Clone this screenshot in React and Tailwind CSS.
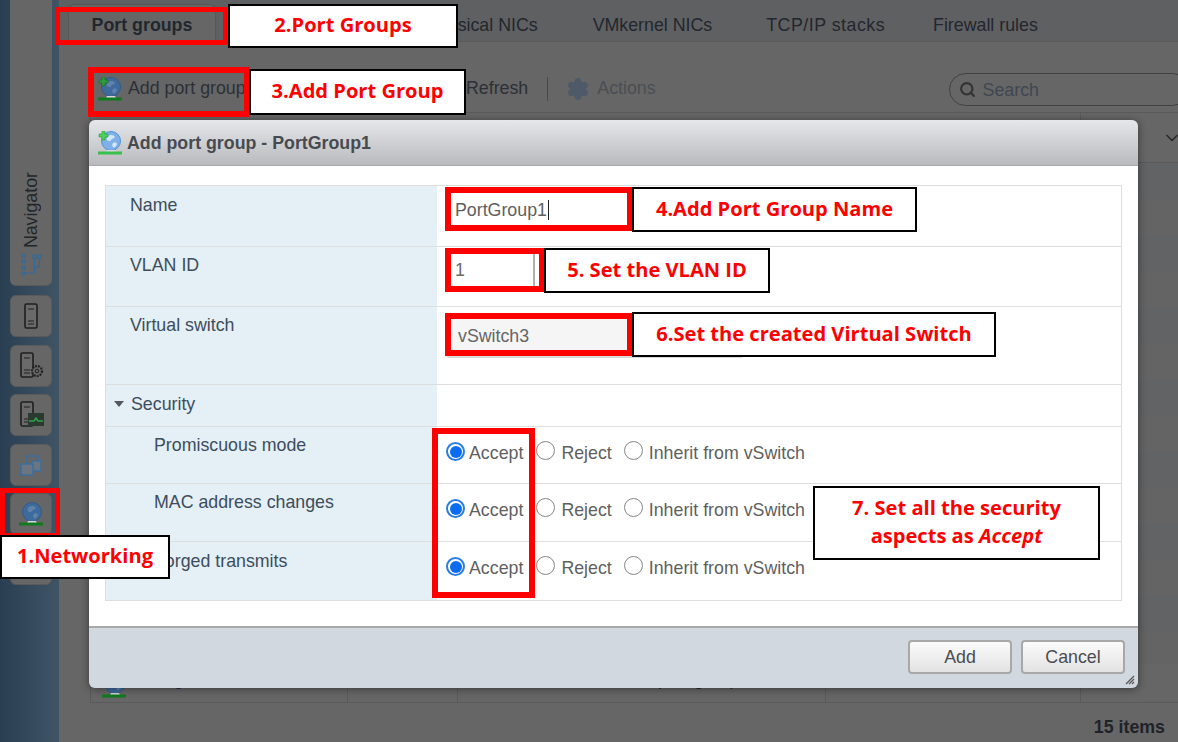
import React from 'react';
import { Search, ChevronDown, Settings } from 'lucide-react';

const GlobeIcon = ({ plus, dim }) => (
    <svg width="24" height="24" viewBox="0 0 24 24" className="shrink-0">
        <circle cx="13" cy="10" r="9.5" fill={dim ? '#3f6a9c' : '#7fb0e6'} stroke={dim ? '#2f5a88' : '#4f8fd8'} />
        <path d="M10 5c3-2 6-1 7 1-1 2-3 1-4 3s-3 1-4 0 0-3 1-4zM15 12c2-1 4 0 4 1-1 3-3 4-4 3s-1-3 0-4z" fill={dim ? '#5f83ab' : '#d5e6f8'} />
        <path d="M9 19h8l1 2H8z" fill="#d8d8d8" />
        <rect x="0" y="20.5" width="24" height="3" fill={dim ? '#0f7a1e' : '#39c04a'} />
        {plus && <path d="M4 0h3v3h3v3H7v3H4V6H1V3h3z" fill={dim ? '#2f9a3e' : '#4fd05f'} stroke={dim ? '#1c6a28' : '#2a9a3a'} strokeWidth="0.6" />}
    </svg>
);

const ServerIcon = ({ children }) => (
    <svg width="26" height="28" viewBox="0 0 26 28">
        <rect x="3" y="1" width="12" height="24" rx="1.5" fill="#6a6a6a" stroke="#1f1f1f" strokeWidth="1.6" />
        <path d="M6 6h6M6 18h6M6 21h6" stroke="#1f1f1f" strokeWidth="1.2" />
        {children}
    </svg>
);

const RailButton = ({ children }) => (
    <div className="w-[42px] h-[42px] rounded-md bg-[#666666] border border-[#5a5a5a] flex items-center justify-center">
        {children}
    </div>
);

const Radio = ({ on }) => on ? (
    <span className="w-[19px] h-[19px] rounded-full border-2 border-[#2a7de1] flex items-center justify-center shrink-0">
        <span className="w-[12px] h-[12px] rounded-full bg-[#0b6cf0]"></span>
    </span>
) : (
    <span className="block w-[19px] h-[19px] rounded-full border-[1.5px] border-[#858585] shrink-0"></span>
);

const SecurityRow = ({ label, h, labelPad }) => (
    <div className={`flex border-t border-[#dedede] ${h}`}>
        <div className={`w-[331px] bg-[#e4eff6] pl-[48px] ${labelPad} text-[#3d4d5c]`}>{label}</div>
        <div className="flex-1 flex items-start pl-[9px] pt-[15px] text-[#5f5f5f]">
            <Radio on />
            <span className="ml-[4px] mt-[1px]">Accept</span>
            <span className="ml-[13px] mt-[-1px]"><Radio /></span>
            <span className="ml-[6px] mt-[1px]">Reject</span>
            <span className="ml-[12px] mt-[-1px]"><Radio /></span>
            <span className="ml-[6px] mt-[1px]">Inherit from vSwitch</span>
        </div>
    </div>
);

const Mark = ({ className }) => (
    <div className={`absolute border-[#ff0000] ${className}`}></div>
);

const Note = ({ className, children }) => (
    <div className={`absolute bg-white border-2 border-black pb-[2px] flex items-center justify-center text-center text-[#ff0000] font-bold text-[20.1px] leading-[28px] font-['Open_Sans',sans-serif] ${className}`}>
        {children}
    </div>
);

const App = () => {
    const stripes = [0, 1, 2, 3, 4, 5, 6, 7, 8, 9, 10, 11, 12, 13];

    return (
        <div className="relative w-[1178px] h-[742px] overflow-hidden bg-[#666666] flex font-['Liberation_Sans',sans-serif] text-[17.8px] leading-[20px]">
            {/* Left rail */}
            <div className="w-[59px] h-full shrink-0 bg-gradient-to-r from-[#2a3e52] to-[#3f5566] pl-[10px] flex flex-col">
                <div className="w-[42px] h-[286px] rounded-b-md bg-[#666666] border-b border-[#5a5a5a] flex flex-col justify-end items-center pb-[7px]">
                    <span className="[writing-mode:vertical-rl] rotate-180 text-[#22262b] mb-[5px]">Navigator</span>
                    <svg width="24" height="25" viewBox="0 0 24 25" fill="none" stroke="#2e6a9c" strokeWidth="1.2">
                        <path d="M3 1h3v3H3zM3 7h3v3H3zM3 13h3v3H3zM3 19h3v3H3zM14 2h3v3h-3zM19 2h3v3h-3zM6 20h9.5V5M15.5 14h5V5" />
                    </svg>
                </div>
                <div className="flex flex-col gap-[7.6px] mt-[9px]">
                    <RailButton>
                        <svg width="16" height="26" viewBox="0 0 16 26">
                            <rect x="2" y="1" width="12" height="24" rx="1.5" fill="#6a6a6a" stroke="#1f1f1f" strokeWidth="1.6" />
                            <path d="M5 6h6M5 18h6M5 21h6" stroke="#1f1f1f" strokeWidth="1.2" />
                        </svg>
                    </RailButton>
                    <RailButton>
                        <ServerIcon>
                            <circle cx="19" cy="19" r="5" fill="#666666" stroke="#222222" strokeWidth="2.2" strokeDasharray="2 1" />
                            <circle cx="19" cy="19" r="1.8" fill="#666666" stroke="#222222" />
                        </ServerIcon>
                    </RailButton>
                    <RailButton>
                        <ServerIcon>
                            <rect x="10" y="12" width="16" height="13" fill="#2a3a2e" />
                            <path d="M11 20h5l2-3 2 3h5" stroke="#2fa24a" strokeWidth="1.5" fill="none" />
                        </ServerIcon>
                    </RailButton>
                    <RailButton>
                        <svg width="24" height="24" viewBox="0 0 24 24" fill="none" stroke="#3b6f9c" strokeWidth="1.5">
                            <rect x="8" y="3" width="11" height="10" />
                            <rect x="13" y="8" width="9" height="10" fill="#6a7682" />
                            <rect x="2" y="11" width="12" height="11" fill="#6a7682" />
                        </svg>
                    </RailButton>
                    <RailButton>
                        <GlobeIcon dim />
                    </RailButton>
                    <RailButton></RailButton>
                </div>
            </div>

            {/* Main content, dimmed behind the dialog */}
            <div className="flex-1 flex flex-col min-w-0">
                <div className="h-[42px] shrink-0 bg-[#5f6062] flex items-end text-[#22272e] border-b border-[#5a5a5a]">
                    <div className="ml-[9px] w-[148px] h-[37px] pt-[4px] bg-[#666666] border-x border-t border-[#575757] rounded-t-md flex items-center justify-center font-bold">Port groups</div>
                    <div className="h-[33px] flex items-center flex-1">
                        <span className="w-[211px] shrink-0"></span>
                        <span className="whitespace-nowrap">Physical NICs</span>
                        <span className="ml-[55px] whitespace-nowrap">VMkernel NICs</span>
                        <span className="ml-[54px] whitespace-nowrap tracking-[0.5px]">TCP/IP stacks</span>
                        <span className="ml-[48px] whitespace-nowrap">Firewall rules</span>
                    </div>
                </div>

                <div className="h-[70px] shrink-0 pl-[39px] flex items-start pt-[36px] text-[#2c3036]">
                    <span className="mt-[-1px] shrink-0"><GlobeIcon plus dim /></span>
                    <span className="ml-[6px] w-[338px] shrink-0 whitespace-nowrap">Add port group</span>
                    <span className="shrink-0">Refresh</span>
                    <span className="ml-[19px] mt-[-1px] w-px h-[24px] shrink-0 bg-[#45494d]"></span>
                    <Settings size={24} className="ml-[18px] mt-[-1px] shrink-0 text-[#4e5a68]" fill="#4e5a68" />
                    <span className="ml-[7px] shrink-0 text-[#4a4e52]">Actions</span>
                    <div className="ml-[293px] mt-[-5px] w-[240px] h-[33px] shrink-0 border border-[#3f4042] rounded-full flex items-center pl-[9px] text-[#3f4750]">
                        <Search size={17} strokeWidth={3} className="text-[#333333]" />
                        <span className="ml-[7px]">Search</span>
                    </div>
                </div>

                <div className="flex-1 ml-[31px] border-l border-y border-[#5a5a5a] flex flex-col min-h-0">
                    <div className="h-[50px] shrink-0 border-b border-[#5a5a5a] flex justify-end items-center">
                        <span className="h-full w-[98px] border-l border-[#5a5a5a] flex items-center justify-end">
                            <ChevronDown size={20} className="text-[#2a2a2a] mr-[-4px]" />
                        </span>
                    </div>
                    <div className="flex-1 flex flex-col overflow-hidden min-h-0">
                        {stripes.map(i => (
                            <div key={i} className="h-[36px] shrink-0 even:bg-[#646464] odd:bg-[#626365]"></div>
                        ))}
                    </div>
                    <div className="h-[38px] shrink-0 relative text-[#1c2f45]">
                        <span className="absolute left-[490px] top-[5px] whitespace-nowrap text-[#22272e]">Standard port group</span>
                        <span className="absolute left-[38px] top-[5px] whitespace-nowrap">Management Network</span>
                        <span className="absolute left-[11px] top-[10px]"><GlobeIcon dim /></span>
                        <span className="absolute left-[745px] top-[8px] w-[25px] h-[10px] bg-[#2a2d33]"></span>
                        <span className="absolute left-[778px] top-[5px] whitespace-nowrap">vSwitch0</span>
                        <span className="absolute left-[1002px] top-[5px] whitespace-nowrap text-[#22272e]">1/1</span>
                        <span className="absolute left-[256px] top-0 bottom-0 w-px bg-[#5a5a5a]"></span>
                        <span className="absolute left-[366px] top-0 bottom-0 w-px bg-[#5a5a5a]"></span>
                        <span className="absolute left-[734px] top-0 bottom-0 w-px bg-[#5a5a5a]"></span>
                        <span className="absolute left-[989px] top-0 bottom-0 w-px bg-[#5a5a5a]"></span>
                    </div>
                </div>
                <div className="h-[39px] shrink-0 flex items-end justify-end pr-[13px] pb-[5px] font-bold text-[#1f2329]">15 items</div>
            </div>

            {/* Dialog */}
            <div className="absolute left-[89px] top-[120px] w-[1049px] h-[568px] rounded-md overflow-hidden flex flex-col shadow-[0_1px_8px_rgba(0,0,0,0.45)]">
                <div className="h-[46px] shrink-0 bg-gradient-to-b from-[#e6e7ea] to-[#b9babd] border-b border-[#a9aaad] flex items-center pl-[9px] text-[#474b50] font-bold">
                    <GlobeIcon plus />
                    <span className="ml-[5px] pt-[1px]">Add port group - PortGroup1</span>
                </div>
                <div className="flex-1 bg-white pt-[19px] px-[16px] border-b-2 border-[#a8a8a8]">
                    <div className="border border-[#dedede] text-[#3d4d5c]">
                        <div className="flex h-[60px]">
                            <div className="w-[331px] bg-[#e4eff6] pl-[24px] pt-[9px]">Name</div>
                            <div className="flex-1 pl-[8px] pt-[4px]">
                                <div className="w-[185px] h-[40px] border-l-2 border-[#4fa3d8] pl-[8px] flex items-center text-[#5f5f5f]">PortGroup1<span className="w-px h-[20px] bg-[#222222] ml-[1px]"></span></div>
                            </div>
                        </div>
                        <div className="flex h-[60px] border-t border-[#dedede]">
                            <div className="w-[331px] bg-[#e4eff6] pl-[24px] pt-[8px]">VLAN ID</div>
                            <div className="flex-1 pl-[18px] pt-[7px]">
                                <div className="w-[80px] h-[32px] border-r-2 border-[#b0b0b0] flex items-center text-[#6a6a6a]">1</div>
                            </div>
                        </div>
                        <div className="flex h-[78px] border-t border-[#dedede]">
                            <div className="w-[331px] bg-[#e4eff6] pl-[24px] pt-[8px]">Virtual switch</div>
                            <div className="flex-1 pl-[9px] pt-[7px]">
                                <div className="w-[298px] h-[44px] pt-[1px] bg-[#f5f5f5] border-b-2 border-[#d8d8d8] rounded-sm pl-[12px] flex items-center text-[#666666]">vSwitch3</div>
                            </div>
                        </div>
                        <div className="flex h-[42px] border-t border-[#dedede]">
                            <div className="w-[331px] bg-[#e4eff6] pl-[8px] pb-[4px] flex items-center">
                                <span className="w-0 h-0 border-x-[5px] border-x-transparent border-t-[6px] border-t-[#55585c]"></span>
                                <span className="ml-[7px]">Security</span>
                            </div>
                            <div className="flex-1"></div>
                        </div>
                        <SecurityRow label="Promiscuous mode" h="h-[57px]" labelPad="pt-[8px]" />
                        <SecurityRow label="MAC address changes" h="h-[58px]" labelPad="pt-[8px]" />
                        <SecurityRow label="Forged transmits" h="h-[59px]" labelPad="pt-[9px]" />
                    </div>
                </div>
                <div className="h-[60px] shrink-0 bg-[#d1d8e0] relative flex items-start justify-end gap-[9px] pr-[13px] pt-[12px] text-[#4a4d50]">
                    <button className="w-[104px] h-[34px] pb-[1px] rounded-[4px] border-2 border-[#a8a8a8] bg-gradient-to-b from-[#fbfbfb] to-[#e3e3e3] flex items-center justify-center">Add</button>
                    <button className="w-[104px] h-[34px] pb-[1px] rounded-[4px] border-2 border-[#a8a8a8] bg-gradient-to-b from-[#fbfbfb] to-[#e3e3e3] flex items-center justify-center">Cancel</button>
                    <svg width="10" height="10" viewBox="0 0 10 10" className="absolute right-[3px] bottom-[3px]" stroke="#555555" strokeWidth="1.2">
                        <path d="M1 9l8-8M4 9l5-5M7 9l2-2" />
                    </svg>
                </div>
            </div>

            {/* Tutorial annotations */}
            <Mark className="left-[55px] top-[7px] w-[173px] h-[38px] border-[5px]" />
            <Mark className="left-[88px] top-[67px] w-[162px] h-[50px] border-[6px]" />
            <Mark className="left-[0px] top-[488px] w-[60px] h-[50px] border-[5px]" />
            <Mark className="left-[445px] top-[187px] w-[188px] h-[44px] border-[6px]" />
            <Mark className="left-[445px] top-[248px] w-[100px] h-[44px] border-[6px]" />
            <Mark className="left-[445px] top-[313px] w-[188px] h-[43px] border-[6px]" />
            <Mark className="left-[432px] top-[428px] w-[103px] h-[170px] border-[6px]" />

            <Note className="left-[228px] top-[4px] w-[230px] h-[44px]">2.Port Groups</Note>
            <Note className="left-[249px] top-[69px] w-[217px] h-[46px]">3.Add Port Group</Note>
            <Note className="left-[632px] top-[187px] w-[285px] h-[45px]">4.Add Port Group Name</Note>
            <Note className="left-[544px] top-[248px] w-[226px] h-[45px]">5. Set the VLAN ID</Note>
            <Note className="left-[632px] top-[312px] w-[364px] h-[45px]">6.Set the created Virtual Switch</Note>
            <Note className="left-[0px] top-[535px] w-[170px] h-[44px]">1.Networking</Note>
            <Note className="left-[813px] top-[486px] w-[287px] h-[74px]">
                <span>7. Set all the security<br />aspects as <em>Accept</em></span>
            </Note>
        </div>
    );
};

export default App;
